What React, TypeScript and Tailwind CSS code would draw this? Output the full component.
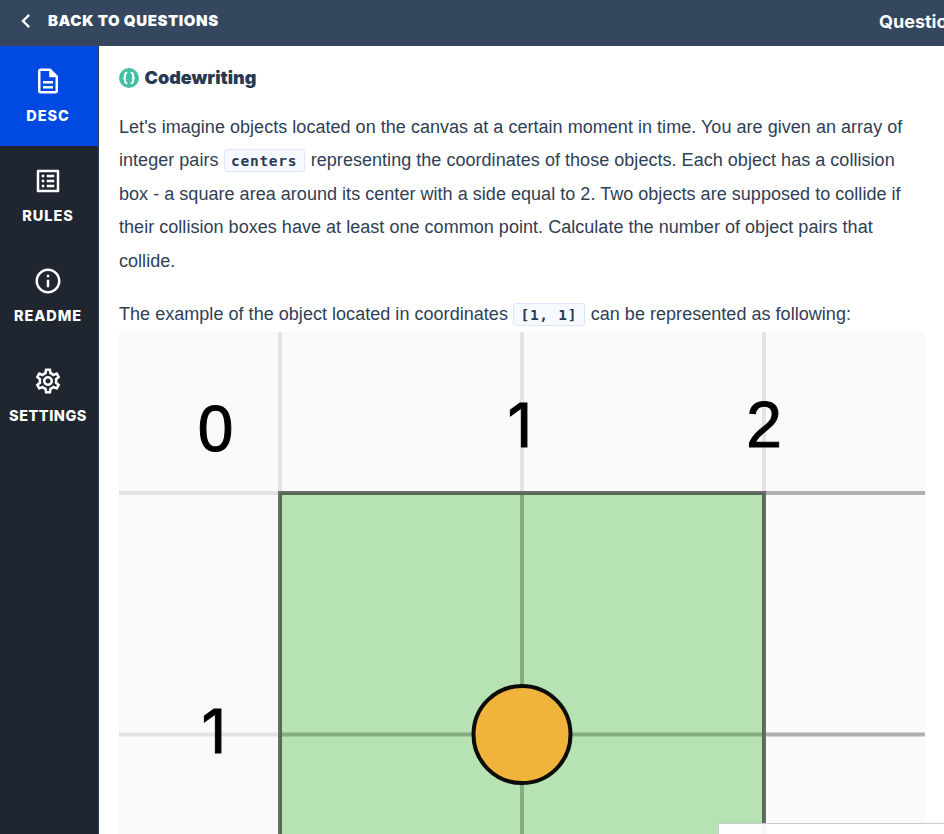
import type { ReactNode } from "react";
import {
  MdChevronLeft,
  MdListAlt,
  MdOutlineDescription,
  MdOutlineInfo,
  MdOutlineSettings,
} from "react-icons/md";

type NavItemProps = { icon: ReactNode; label: string; spacing: string; active?: boolean };

function NavItem({ icon, label, spacing, active }: NavItemProps) {
  return (
    <div
      className={`flex h-[100px] w-[98px] flex-col items-center pt-5 pr-0.5 text-white ${active ? "bg-[#0049e1]" : ""}`}
    >
      {icon}
      <div className={`mt-[10px] flex h-5 items-center text-[14.5px] font-extrabold whitespace-nowrap ${spacing}`}>
        {label}
      </div>
    </div>
  );
}

function Code({ children }: { children: ReactNode }) {
  return (
    <code className="mr-px rounded-[3px] border border-[#dfe5fb] bg-[#f6f9ff] px-[6.500px] pt-[3px] pb-[2px] font-['DejaVu_Sans_Mono',monospace] text-[14.5px] leading-none font-bold tracking-[0.72px] text-[#273a52]">
      {children}
    </code>
  );
}

function Diagram() {
  return (
    <svg className="block h-[502px] w-[806px] shrink-0" viewBox="119 332 806 502">
      <rect x="119" y="332" width="806" height="502" fill="#fafafa" />
      <g fill="#e3e3e3">
        <rect x="278" y="332" width="4" height="160" />
        <rect x="520" y="332" width="4" height="160" />
        <rect x="762" y="332" width="4" height="160" />
        <rect x="119" y="491" width="160" height="4" />
        <rect x="119" y="732.5" width="160" height="4" />
      </g>
      <g fill="#b0b0b0">
        <rect x="765" y="491" width="160" height="4" />
        <rect x="765" y="732.5" width="160" height="4" />
      </g>
      <rect x="280" y="493" width="484" height="350" fill="#b6e2b4" />
      <rect x="520" y="493" width="4" height="341" fill="#84ae82" />
      <rect x="280" y="732.5" width="484" height="4" fill="#84ae82" />
      <path d="M280 836V493H764V836" fill="none" stroke="#6c6c6c" strokeWidth="4" />
      <path d="M281 836V494H763V836" fill="none" stroke="#526a51" strokeWidth="2" />
      <circle cx="522" cy="734.5" r="48.5" fill="#f0b33c" stroke="#0c0c0a" strokeWidth="4" />
      <g fill="#000" stroke="#000" strokeWidth="1" fontSize="64" textAnchor="middle" fontFamily="'Liberation Sans', Arial, sans-serif">
        <text x="215.500" y="451">0</text>
        <text x="764" y="447">2</text>
      </g>
      <g fill="#000" stroke="#000" strokeWidth="1" fontSize="61" fontFamily="Inter, sans-serif">
        <text x="507.500" y="447">1</text>
        <text x="201.500" y="753">1</text>
      </g>
    </svg>
  );
}

export default function App() {
  return (
    <div className="relative flex h-[834px] w-[944px] flex-col overflow-hidden bg-white font-[Inter,sans-serif]">
      <header className="flex h-[46px] shrink-0 items-center justify-between bg-[#34475e] pb-1 pl-3 text-white">
        <div className="flex items-center">
          <MdChevronLeft size={28} />
          <span className="ml-2 text-[15px] font-black tracking-[0.58px] whitespace-nowrap">BACK TO QUESTIONS</span>
        </div>
        <div className="w-[65px] overflow-hidden text-[18px] font-bold whitespace-nowrap">Question</div>
      </header>
      <div className="flex min-h-0 flex-1">
        <nav className="w-[99px] shrink-0 border-r border-[#2c3c50] bg-[#1f2630]">
          <NavItem active icon={<MdOutlineDescription size={30} />} label="DESC" spacing="tracking-[0.9px]" />
          <NavItem icon={<MdListAlt size={30} />} label="RULES" spacing="tracking-[0.9px]" />
          <NavItem icon={<MdOutlineInfo size={30} />} label="README" spacing="tracking-[0.9px]" />
          <NavItem icon={<MdOutlineSettings size={30} />} label="SETTINGS" spacing="tracking-[0.5px]" />
        </nav>
        <main className="flex min-w-0 flex-1 flex-col pl-5 text-[#2f4055]">
          <div className="mt-[22px] flex h-5 shrink-0 items-center text-[#273a52]">
            <svg className="h-5 w-5" viewBox="0 0 20 20">
              <circle cx="10" cy="10" r="10" fill="#47bfa5" />
              <path
                d="M8.300 4.800C6.500 4.800 6 5.600 6 7V8.300C6 9.300 5.500 10 4.300 10C5.500 10 6 10.700 6 11.700V13C6 14.400 6.500 15.200 8.300 15.200M11.700 4.800C13.500 4.800 14 5.600 14 7V8.300C14 9.300 14.500 10 15.700 10C14.500 10 14 10.700 14 11.700V13C14 14.400 13.500 15.200 11.700 15.200"
                fill="none"
                stroke="#fff"
                strokeWidth="1.900"
              />
            </svg>
            <h1 className="-mt-0.5 ml-[5.500px] text-[18px] font-black whitespace-nowrap">Codewriting</h1>
          </div>
          <div className="mt-[23px] h-[221px] shrink-0 font-['Liberation_Sans',Arial,sans-serif] text-[18px] leading-[33.4px] tracking-[0.035px] whitespace-nowrap">
            <p>
              Let's imagine objects located on the canvas at a certain moment in time. You are given an array of
              <br />
              integer pairs <Code>centers</Code> representing the coordinates of those objects. Each object has a collision
              <br />
              box - a square area around its center with a side equal to 2. Two objects are supposed to collide if
              <br />
              their collision boxes have at least one common point. Calculate the number of object pairs that
              <br />
              collide.
            </p>
            <p className="mt-5">
              The example of the object located in coordinates <Code>[1, 1]</Code> can be represented as following:
            </p>
          </div>
          <Diagram />
        </main>
      </div>
      <div className="absolute right-0 bottom-0 h-[11.500px] w-[226px] border-t border-l border-black/20 bg-white/95" />
    </div>
  );
}
